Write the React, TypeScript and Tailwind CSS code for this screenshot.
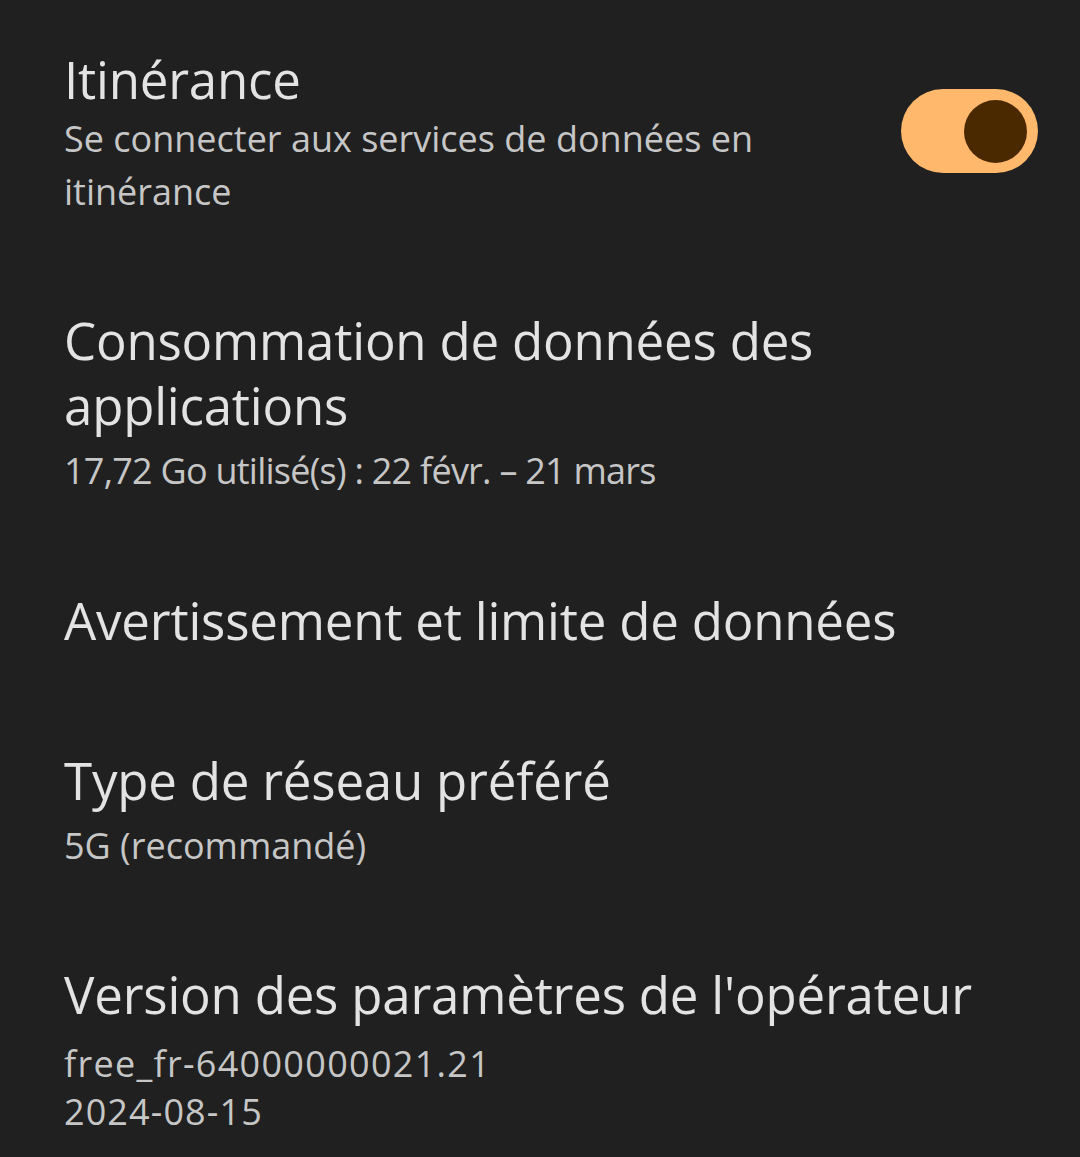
import React from "react";

type Line = { text: string; cls?: string };

type Item = {
  title: string;
  lines?: Line[];
  toggle?: boolean;
  row: string;
  sub: string;
};

const items: Item[] = [
  {
    title: "Itinérance",
    lines: [{ text: "Se connecter aux services de données en itinérance" }],
    toggle: true,
    row: "pt-[47px] pb-[45px]",
    sub: "mt-0 leading-[53px]",
  },
  {
    title: "Consommation de données des applications",
    lines: [{ text: "17,72 Go utilisé(s) : 22 févr. – 21 mars", cls: "tracking-[-0.75px]" }],
    row: "py-[45px]",
    sub: "mt-[7px] leading-[52px]",
  },
  { title: "Avertissement et limite de données", row: "pt-[46px] pb-[50px]", sub: "" },
  {
    title: "Type de réseau préféré",
    lines: [{ text: "5G (recommandé)" }],
    row: "py-[45px]",
    sub: "mt-[7px] leading-[52px]",
  },
  {
    title: "Version des paramètres de l'opérateur",
    lines: [
      { text: "free_fr-64000000021.21", cls: "tracking-[1.3px]" },
      { text: "2024-08-15", cls: "tracking-[1.1px]" },
    ],
    row: "pt-[45px] pb-[16px]",
    sub: "mt-[13px] leading-[48px]",
  },
];

function Toggle() {
  return (
    <div className="mt-[42px] flex h-[84px] w-[137px] shrink-0 items-center justify-end rounded-full bg-[#ffb86c] pr-[11px]">
      <div className="h-[63px] w-[63px] rounded-full bg-[#4a2800]" />
    </div>
  );
}

export default function App() {
  return (
    <div className="min-h-[1157px] w-[1080px] overflow-hidden bg-[#202020] font-['Open_Sans',sans-serif]">
      {items.map((it) => (
        <div key={it.title} className={`flex items-start gap-6 pl-16 pr-[42px] ${it.row}`}>
          <div className="flex-1">
            <div className="text-[51px] leading-[65px] tracking-[-0.2px] text-[#e3e3e3]">{it.title}</div>
            {it.lines && (
              <div className={`text-[36px] text-[#c6c6c6] ${it.sub}`}>
                {it.lines.map((l) => (
                  <div key={l.text} className={l.cls}>
                    {l.text}
                  </div>
                ))}
              </div>
            )}
          </div>
          {it.toggle && <Toggle />}
        </div>
      ))}
    </div>
  );
}
